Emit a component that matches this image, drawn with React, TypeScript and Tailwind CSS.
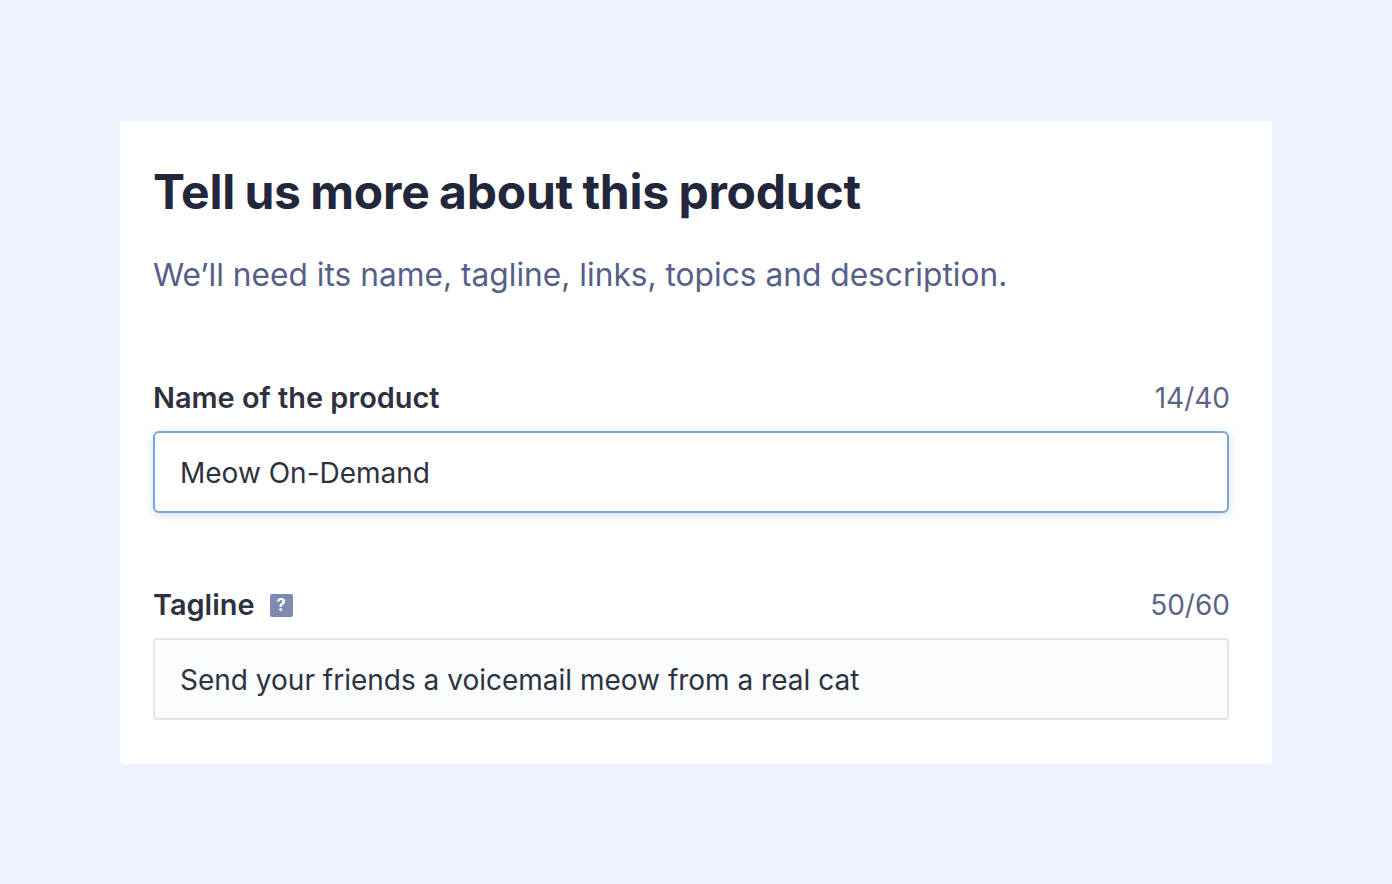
function Field({
  label,
  count,
  value,
  focused,
  help,
}: {
  label: string
  count: string
  value: string
  focused?: boolean
  help?: boolean
}) {
  return (
    <div>
      <div className="flex items-center justify-between h-[32px]">
        <div className="flex items-center">
          <span className="text-[28.9px] leading-[32px] font-semibold text-[#2e3240]">{label}</span>
          {help && (
            <span className="ml-[15px] flex items-center justify-center w-[23px] h-[23px] bg-[#7e89b4] rounded-[2px] text-white text-[17px] font-bold leading-none">
              ?
            </span>
          )}
        </div>
        <span className="-mr-px text-[28px] leading-[32px] text-[#5b6486]">{count}</span>
      </div>
      {focused ? (
        <div className="mt-[17px] h-[82px] flex items-center px-[25px] pt-[2px] bg-white border-2 border-[#7da5dc] rounded-[6px] shadow-[0_2px_10px_rgba(125,165,220,0.35)] text-[28px] text-[#2e3240]">
          {value}
        </div>
      ) : (
        <div className="mt-[17px] h-[82px] flex items-center px-[25px] pt-[2px] bg-[#fbfcfe] border-2 border-[#e2e4e9] rounded-[4px] text-[28px] text-[#2e3240]">
          {value}
        </div>
      )}
    </div>
  )
}

export default function App() {
  return (
    <div className="w-[1392px] h-[884px] bg-[#edf2fe] pt-[121px] pl-[120px] font-['Inter',sans-serif]">
      <div className="w-[1152px] h-[643px] bg-white rounded-[4px] pl-[33px] pr-[43px] pt-[41px] shadow-[0_0_14px_rgba(255,255,255,0.35)]">
        <h1 className="text-[48px] leading-[60px] font-bold tracking-[-0.005em] [word-spacing:-1.6px] text-[#23273b]">
          Tell us more about this product
        </h1>
        <p className="mt-[31px] text-[31.7px] leading-[44px] text-[#565f88]">
          We’ll need its name, tagline, links, topics and description.
        </p>
        <div className="mt-[85px]">
          <Field label="Name of the product" count="14/40" value="Meow On-Demand" focused />
        </div>
        <div className="mt-[76px]">
          <Field label="Tagline" count="50/60" value="Send your friends a voicemail meow from a real cat" help />
        </div>
      </div>
    </div>
  )
}
